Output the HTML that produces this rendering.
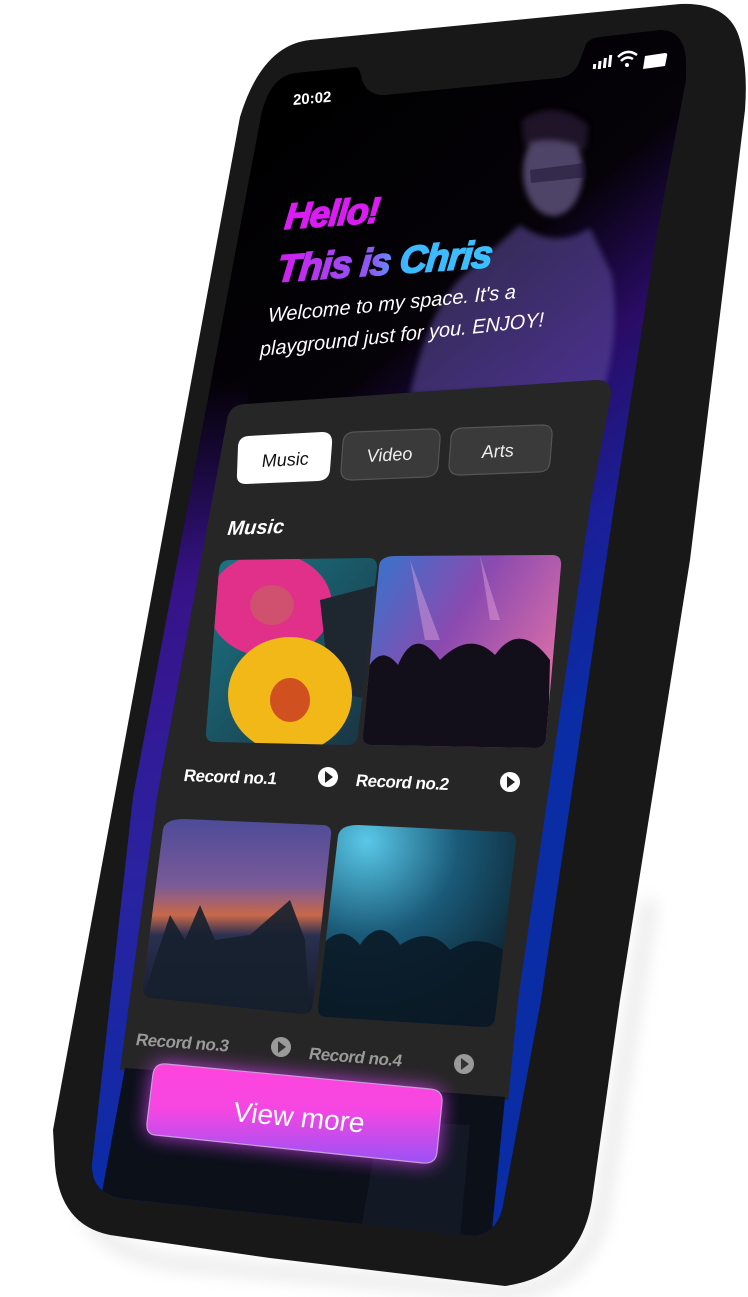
<!DOCTYPE html>
<html><head><meta charset="utf-8"><style>
html,body{margin:0;padding:0;background:#fff;}
svg{display:block}
text{font-family:"Liberation Sans",sans-serif;}
</style></head><body>
<svg width="748" height="1297" viewBox="0 0 748 1297" xmlns="http://www.w3.org/2000/svg">
<defs>
<linearGradient id="scr" x1="260" y1="120" x2="680" y2="620" gradientUnits="userSpaceOnUse">
<stop offset="0" stop-color="#000"/>
<stop offset="0.4" stop-color="#050208"/>
<stop offset="0.6" stop-color="#2a0c66"/>
<stop offset="0.8" stop-color="#1a1f98"/>
<stop offset="1" stop-color="#0a2ca4"/>
</linearGradient>
<linearGradient id="scrL" x1="0" y1="380" x2="0" y2="1200" gradientUnits="userSpaceOnUse">
<stop offset="0" stop-color="#3a1490" stop-opacity="0"/>
<stop offset="0.25" stop-color="#3a1490" stop-opacity="0.9"/>
<stop offset="0.6" stop-color="#2a22a0"/>
<stop offset="1" stop-color="#0a2ca8"/>
</linearGradient>
<linearGradient id="chris" x1="0" y1="0" x2="1" y2="0">
<stop offset="0" stop-color="#d41cf0"/>
<stop offset="0.45" stop-color="#8a5cf5"/>
<stop offset="0.6" stop-color="#3cb8ff"/>
<stop offset="1" stop-color="#3cc0ff"/>
</linearGradient>
<linearGradient id="btn" x1="0" y1="0" x2="0" y2="1">
<stop offset="0" stop-color="#ff44dc"/>
<stop offset="0.45" stop-color="#f646e2"/>
<stop offset="1" stop-color="#9a52f5"/>
</linearGradient>
<linearGradient id="i2" x1="0" y1="0" x2="1" y2="0.6">
<stop offset="0" stop-color="#2a7ad0"/>
<stop offset="0.5" stop-color="#8a4ab0"/>
<stop offset="1" stop-color="#e070a8"/>
</linearGradient>
<linearGradient id="i3" x1="0" y1="0" x2="0" y2="1">
<stop offset="0" stop-color="#4a4a98"/>
<stop offset="0.35" stop-color="#7a5a98"/>
<stop offset="0.5" stop-color="#c8684a"/>
<stop offset="0.6" stop-color="#2a3050"/>
<stop offset="1" stop-color="#141a28"/>
</linearGradient>
<radialGradient id="i4" cx="0.25" cy="0.1" r="1">
<stop offset="0" stop-color="#5ac8e8"/>
<stop offset="0.45" stop-color="#1a5a78"/>
<stop offset="1" stop-color="#0a1620"/>
</radialGradient>
<linearGradient id="i1" x1="0" y1="0" x2="1" y2="1">
<stop offset="0" stop-color="#1a7a88"/>
<stop offset="1" stop-color="#1a3040"/>
</linearGradient>
<filter id="glow" x="-30%" y="-60%" width="160%" height="220%"><feGaussianBlur stdDeviation="10"/></filter>
<filter id="bl" x="-30%" y="-30%" width="160%" height="160%"><feGaussianBlur stdDeviation="3"/></filter>
<filter id="sh" x="-20%" y="-20%" width="140%" height="140%"><feGaussianBlur stdDeviation="8"/></filter>
<clipPath id="scrclip"><path d="M260 121 Q268 76 296 73 L355 67 Q360 67 362 80 Q368 96 385 95 L558 78 Q575 76 580 60 L586 44 Q590 38 600 37 L660 30 Q684 30 686 60 L686 80 L657 233 L615 500 L541 1000 L503 1205 Q498 1232 475 1236 L125 1199 Q92 1195 92 1165 L133 797 Z"/></clipPath>
</defs>

<path d="M80 1200 Q100 1260 200 1265 L500 1292 Q580 1290 600 1220 L650 900" fill="none" stroke="#aaa" stroke-width="14" opacity="0.25" filter="url(#sh)"/>

<path d="M240 117 Q262 45 310 40 L680 4 Q730 2 740 40 Q748 70 745 110 L690 560 L620 1000 L592 1200 Q580 1275 505 1286 L270 1258 L110 1235 Q60 1225 55 1165 L53 1130 Z" fill="#181818"/>

<g clip-path="url(#scrclip)">
<rect x="0" y="0" width="748" height="1297" fill="url(#scr)"/>
<path d="M60 380 L250 380 L150 1240 L60 1240 Z" fill="url(#scrL)"/>
<g opacity="0.6" filter="url(#bl)">
<ellipse cx="553" cy="172" rx="30" ry="44" fill="#8070a8"/>
<path d="M522 120 Q555 98 588 125 L586 150 Q555 135 524 145 Z" fill="#302040"/>
<path d="M520 225 Q555 250 590 228 L612 275 Q620 330 605 385 L410 395 Q430 300 470 270 Z" fill="#5a4a98"/>
</g>
<path d="M530 170 L585 163 L587 177 L531 183 Z" fill="#1a1030" opacity="0.5"/>
<path d="M245 404 L595 380 Q612 379 611 395 L591 500 L518 1000 L508 1100 L120 1070 L157 797 L227 420 Q229 405 245 404 Z" fill="#262626"/>
<path d="M125 1068 L505 1097 L490 1250 L95 1230 Z" fill="#0b1019"/>
<path d="M380 1120 L470 1125 L460 1240 L360 1235 Z" fill="#151c2a" opacity="0.7"/>
</g>

<text transform="translate(293,105) rotate(-5) skewX(-6)" font-size="15" fill="#fff" font-weight="bold">20:02</text>
<g fill="#fff">
<rect x="600" y="64" width="3" height="5" transform="skewX(-6)"/>
<rect x="605" y="61" width="3" height="8" transform="skewX(-6)"/>
<rect x="610" y="58" width="3" height="10" transform="skewX(-6)"/>
<rect x="615" y="55" width="3" height="12" transform="skewX(-6)"/>
</g>
<path d="M618 57 Q627 48 637 55" stroke="#fff" stroke-width="2.5" fill="none"/>
<path d="M621 61 Q627 55 633 59" stroke="#fff" stroke-width="2.5" fill="none"/>
<circle cx="627" cy="65" r="2" fill="#fff"/>
<path d="M645 56 L665 53 Q668 53 667 56 L665 66 L643 69 Z" fill="#fff"/>

<text transform="translate(284,229) rotate(-4) skewX(-10)" font-size="36" font-weight="bold" font-style="italic" fill="#d81cf2" stroke="#d81cf2" stroke-width="1.6" letter-spacing="-1">Hello!</text>
<text transform="translate(276,282) rotate(-4) skewX(-10)" font-size="38" font-weight="bold" font-style="italic" fill="url(#chris)" stroke="url(#chris)" stroke-width="1.6" letter-spacing="-1">This is Chris</text>
<text transform="translate(268,322) rotate(-5.5) skewX(-6)" font-size="20" font-style="italic" fill="#fff">Welcome to my space. It's a</text>
<text transform="translate(260,356) rotate(-6) skewX(-6)" font-size="20" font-style="italic" fill="#fff">playground just for you. ENJOY!</text>

<path d="M248 436 L322 432 Q333 432 332 444 L330 470 Q329 480 318 481 L246 484 Q236 484 237 474 L238 446 Q239 437 248 436 Z" fill="#fff"/>
<text transform="translate(262,467) rotate(-3)" font-size="18" font-style="italic" fill="#111">Music</text>
<path d="M354 432 L430 429 Q441 429 440 440 L438 466 Q437 476 426 477 L352 480 Q341 480 341 470 L343 442 Q344 433 354 432 Z" fill="#3a3a3a" stroke="#555" stroke-width="1.2"/>
<text transform="translate(367,462) rotate(-3)" font-size="18" font-style="italic" fill="#eee">Video</text>
<path d="M462 428 L542 425 Q553 425 552 436 L550 462 Q549 472 538 472 L460 475 Q449 475 449 465 L451 438 Q452 429 462 428 Z" fill="#3a3a3a" stroke="#555" stroke-width="1.2"/>
<text transform="translate(482,458) rotate(-3)" font-size="18" font-style="italic" fill="#eee">Arts</text>

<text transform="translate(227,535) rotate(-2) skewX(-8)" font-size="20" font-weight="bold" font-style="italic" fill="#fff">Music</text>

<clipPath id="c1"><path d="M230 560 L368 558 Q378 558 377 568 L358 735 Q357 745 347 745 L215 742 Q205 742 206 732 L219 570 Q220 560 230 560 Z"/></clipPath>
<g clip-path="url(#c1)">
<rect x="200" y="550" width="180" height="200" fill="url(#i1)"/>
<ellipse cx="270" cy="605" rx="62" ry="52" fill="#e0308a"/>
<ellipse cx="272" cy="605" rx="22" ry="20" fill="#d05070"/>
<path d="M320 600 L378 585 L370 700 L330 690 Z" fill="#1e2630"/>
<ellipse cx="290" cy="695" rx="62" ry="58" fill="#f2b818"/>
<ellipse cx="290" cy="700" rx="20" ry="22" fill="#d05020"/>
</g>
<clipPath id="c2"><path d="M396 556 L552 555 Q562 555 561 566 L546 738 Q545 748 535 748 L372 745 Q362 745 363 735 L379 566 Q380 556 396 556 Z"/></clipPath>
<g clip-path="url(#c2)">
<rect x="360" y="550" width="205" height="200" fill="url(#i2)"/>
<path d="M362 680 Q378 640 398 665 Q415 625 440 660 Q470 630 495 655 Q520 620 550 660 L548 750 L360 750 Z" fill="#120e1a"/>
<path d="M410 560 L440 640 L425 640 Z M480 556 L500 620 L490 620 Z" fill="#f0b0e0" opacity="0.4"/>
</g>
<clipPath id="c3"><path d="M185 819 L322 825 Q332 825 331 835 L313 1004 Q312 1014 302 1014 L152 998 Q142 997 143 987 L163 829 Q165 819 185 819 Z"/></clipPath>
<g clip-path="url(#c3)">
<rect x="140" y="815" width="195" height="200" fill="url(#i3)"/>
<path d="M155 960 L170 915 L185 940 L200 905 L215 940 L250 935 L290 900 L305 940 L310 1020 L140 1010 Z" fill="#16202e" opacity="0.9"/>
</g>
<clipPath id="c4"><path d="M358 825 L507 832 Q517 832 516 843 L495 1017 Q494 1027 484 1027 L327 1017 Q317 1017 318 1007 L338 836 Q340 825 358 825 Z"/></clipPath>
<g clip-path="url(#c4)">
<rect x="315" y="820" width="205" height="210" fill="url(#i4)"/>
<path d="M318 950 Q340 920 360 945 Q380 915 400 945 Q430 925 450 950 Q480 930 510 955 L500 1030 L318 1030 Z" fill="#0a1a26" opacity="0.9"/>
</g>

<text transform="translate(183,781) rotate(2) skewX(-8)" font-size="17" font-weight="bold" fill="#fff" letter-spacing="-0.5">Record no.1</text>
<circle cx="328" cy="777" r="10" fill="#fff"/><path d="M325 771 L333 777 L325 783 Z" fill="#222"/>
<text transform="translate(355,786) rotate(2.5) skewX(-8)" font-size="17" font-weight="bold" fill="#fff" letter-spacing="-0.5">Record no.2</text>
<circle cx="510" cy="782" r="10" fill="#fff"/><path d="M507 776 L515 782 L507 788 Z" fill="#222"/>
<text transform="translate(135,1045) rotate(4) skewX(-8)" font-size="17" font-weight="bold" fill="#9a9a9a" letter-spacing="-0.5">Record no.3</text>
<circle cx="281" cy="1047" r="10" fill="#9a9a9a"/><path d="M278 1041 L286 1047 L278 1053 Z" fill="#333"/>
<text transform="translate(308,1059) rotate(4.5) skewX(-8)" font-size="17" font-weight="bold" fill="#9a9a9a" letter-spacing="-0.5">Record no.4</text>
<circle cx="464" cy="1064" r="10" fill="#9a9a9a"/><path d="M461 1058 L469 1064 L461 1070 Z" fill="#333"/>

<path d="M166 1064 L430 1089 Q443 1090 442 1102 L437 1152 Q436 1164 423 1163 L155 1135 Q146 1134 147 1123 L153 1074 Q155 1063 166 1064 Z" fill="#d040f0" filter="url(#glow)" opacity="0.9"/>
<path d="M166 1064 L430 1089 Q443 1090 442 1102 L437 1152 Q436 1164 423 1163 L155 1135 Q146 1134 147 1123 L153 1074 Q155 1063 166 1064 Z" fill="url(#btn)" stroke="#c8a0d8" stroke-width="1.2"/>
<text transform="translate(232,1121) rotate(5) skewX(-4)" font-size="28" fill="#fff">View more</text>
</svg>
</body></html>
